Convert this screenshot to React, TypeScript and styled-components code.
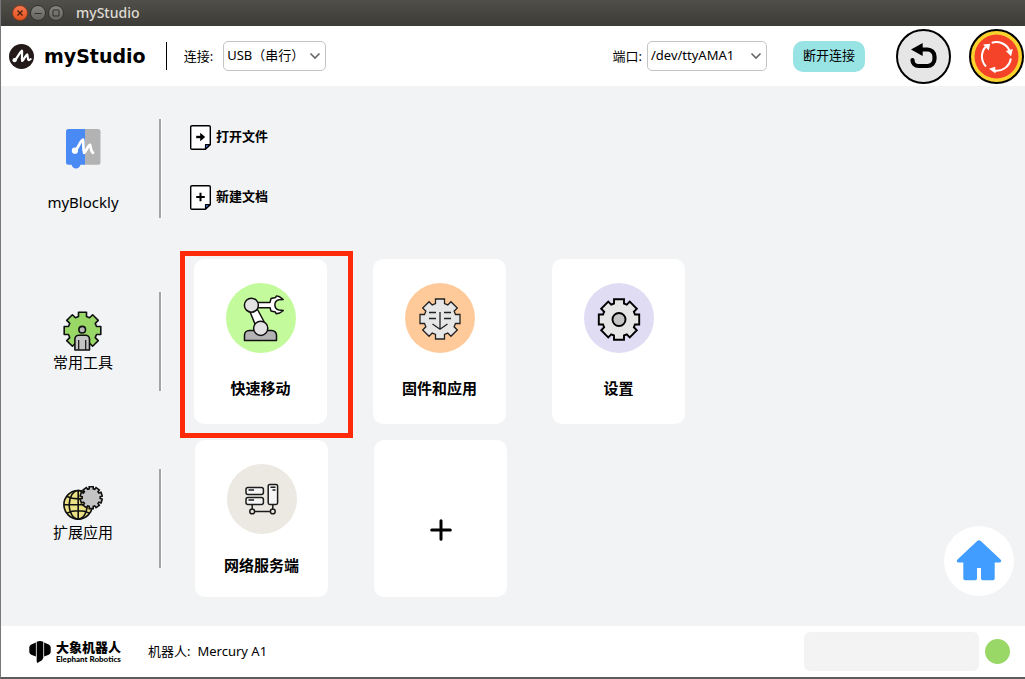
import React from "react";
import styled, { createGlobalStyle } from "styled-components";

const GlobalStyle = createGlobalStyle`
  *, *::before, *::after { box-sizing: border-box; }
  html, body, #root { height: 100%; }
  body {
    margin: 0;
    background: #fff;
    color: #000;
    font-family: "Noto Sans", "Noto Sans CJK SC", sans-serif;
    font-size: 13px;
  }
  button, input, select { font: inherit; color: inherit; }
  svg { display: block; flex: none; }
`;

const Window = styled.div`
  min-height: 100%;
  display: flex;
  flex-direction: column;
  border-left: 1px solid #77787a;
  border-bottom: 2px solid #5c5c5a;
`;

const TitleBar = styled.div`
  height: 26px;
  display: flex;
  align-items: center;
  padding-left: 11px;
  background: linear-gradient(#504f49, #3c3b37);
  color: #dfdbd2;
`;

const WindowButton = styled.button<{ $close?: boolean }>`
  width: 16px;
  height: 16px;
  margin-right: 2px;
  padding: 0;
  display: flex;
  align-items: center;
  justify-content: center;
  border: 1px solid ${(p) => (p.$close ? "#8d3a1c" : "#33322e")};
  border-radius: 50%;
  background: ${(p) =>
    p.$close ? "linear-gradient(#f4774f, #e2531f)" : "linear-gradient(#85847d, #65645e)"};
`;

const WindowTitle = styled.span`
  margin-left: 10px;
  font-size: 14px;
  line-height: 20px;
  font-weight: 500;
`;

const Header = styled.header`
  height: 60px;
  display: flex;
  align-items: center;
  padding: 0 1px 0 8px;
  background: #fff;
`;

const Brand = styled.h1`
  margin: 0 20px 0 10px;
  font: bold 19px/28px "DejaVu Sans", sans-serif;
`;

const HeaderRule = styled.span`
  width: 1px;
  height: 28px;
  background: #000;
`;

const Field = styled.label<{ $gap: number }>`
  display: flex;
  align-items: center;
  gap: ${(p) => p.$gap}px;
  line-height: 20px;
`;

const HeaderLeft = styled.div`
  flex: 1;
  display: flex;
  align-items: center;

  ${Field} { margin-left: 17px; }
`;

const SelectBox = styled.span<{ $width: number }>`
  position: relative;
  width: ${(p) => p.$width}px;

  svg {
    position: absolute;
    right: 5px;
    top: 11px;
    pointer-events: none;
  }
`;

const Select = styled.select`
  width: 100%;
  height: 30px;
  padding: 0 20px 2px 3px;
  appearance: none;
  display: block;
  border: 1px solid #c4c4c4;
  border-radius: 5px;
  background: #fff;
`;

const DisconnectButton = styled.button`
  height: 31px;
  margin: 0 31px 0 26px;
  padding: 0 10px 2px;
  border: 0;
  border-radius: 10px;
  background: #98e3e3;
  line-height: 20px;
`;

const RoundButton = styled.button`
  padding: 0;
  border: 0;
  border-radius: 50%;
  background: none;

  & + & { margin-left: 18px; }
`;

const Main = styled.main`
  position: relative;
  flex: 1;
  padding: 33px 0 29px;
  background: #f1f3f5;
`;

const Section = styled.section<{ $gap?: number }>`
  display: flex;
  align-items: center;
  margin-top: ${(p) => p.$gap ?? 0}px;
`;

const Category = styled.h2<{ $gap: number; $top?: number; $bottom?: number }>`
  width: 158px;
  margin: 0;
  padding: ${(p) => p.$top ?? 0}px 0 ${(p) => p.$bottom ?? 0}px 6px;
  display: flex;
  flex-direction: column;
  align-items: center;
  gap: ${(p) => p.$gap}px;
  font-size: 15px;
  line-height: 22px;
  font-weight: 400;
`;

const SectionRule = styled.span`
  width: 3px;
  height: 99px;
  border-left: 2px solid #a3a3a3;
  border-right: 1px solid #fff;
`;

const FileList = styled.div`
  display: flex;
  flex-direction: column;
  gap: 35px;
  margin-left: 28px;
  padding-bottom: 3px;
`;

const FileButton = styled.button`
  height: 25px;
  padding: 0;
  display: flex;
  align-items: center;
  gap: 5px;
  border: 0;
  background: none;
  font-weight: 700;
  line-height: 20px;

  span { padding-bottom: 2px; }
`;

const CardRow = styled.div<{ $inset: number }>`
  display: flex;
  gap: 46px;
  margin-left: ${(p) => p.$inset}px;
`;

const CardSlot = styled.div`
  position: relative;
`;

const Highlight = styled.span`
  position: absolute;
  inset: -8px -26px -14px -14px;
  border: 5px solid #ff2a0a;
  pointer-events: none;
`;

const Card = styled.button<{ $compact?: boolean }>`
  width: 133px;
  height: ${(p) => (p.$compact ? 157 : 165)}px;
  padding: 24px 0 0;
  display: flex;
  flex-direction: column;
  align-items: center;
  gap: ${(p) => (p.$compact ? 20 : 24)}px;
  border: 0;
  border-radius: 10px;
  background: #fff;
  font-size: 15px;
  line-height: 22px;
  font-weight: 700;
`;

const AddCard = styled(Card)`
  padding-top: 22px;
  justify-content: center;
`;

const HomeButton = styled.button`
  position: absolute;
  right: 11px;
  bottom: 30px;
  padding: 0;
  border: 0;
  border-radius: 50%;
  background: #fff;
`;

const Footer = styled.footer`
  height: 51px;
  display: flex;
  align-items: center;
  padding: 0 15px 0 28px;
  background: #fff;
`;

const Company = styled.div`
  width: 93px;
  display: flex;
  align-items: center;
  gap: 5px;
  margin-right: 26px;
  white-space: nowrap;
`;

const CompanyName = styled.div`
  padding-top: 1px;
  font-size: 13px;
  line-height: 15px;
  font-weight: 900;
`;

const CompanyLatin = styled.div`
  font-family: Lato, sans-serif;
  font-size: 8px;
  line-height: 9px;
  font-weight: 900;
`;

const Robot = styled.div`
  flex: 1;
  display: flex;
  gap: 7px;
  padding-bottom: 2px;
  line-height: 20px;
`;

const StatusText = styled.input`
  width: 175px;
  height: 39px;
  margin-right: 6px;
  padding: 0 10px;
  border: 0;
  border-radius: 6px;
  background: #f3f3f3;
`;

const StatusLight = styled.span`
  width: 25px;
  height: 25px;
  border-radius: 50%;
  background: #99d867;
`;

// Closed outline of a gear whose teeth have parallel sides.
function gear(cx: number, cy: number, outer: number, inner: number, width: number, teeth = 8) {
  const pts: string[] = [];
  for (let i = 0; i < teeth; i++) {
    const a = (i * 2 * Math.PI) / teeth;
    const local = [
      [-width / 2, -inner],
      [-width / 2, -outer],
      [width / 2, -outer],
      [width / 2, -inner],
    ];
    for (const [x, y] of local) {
      const px = cx + x * Math.cos(a) - y * Math.sin(a);
      const py = cy + x * Math.sin(a) + y * Math.cos(a);
      pts.push(`${px.toFixed(2)} ${py.toFixed(2)}`);
    }
  }
  return `M${pts.join("L")}Z`;
}

const Chevron = () => (
  <svg width="12" height="8" viewBox="0 0 12 8" fill="none" stroke="#666" strokeWidth="1.6">
    <path d="M1.5 1.5 6 6l4.5-4.5" />
  </svg>
);

const LogoIcon = () => (
  <svg width="25" height="25" viewBox="0 0 25 25">
    <circle cx="12.5" cy="12.5" r="12.5" fill="#231a19" />
    <circle cx="5.6" cy="16.2" r="2.1" fill="#fff" />
    <path
      d="M5.600 16.200C8.400 14.500 9.500 9.500 13 6.600c.5 3-.6 6.600.2 10.400 2-1.600 2.800-5.200 5-6.600.8 2 .2 4.800 1.400 5.600.8.200 1.400-.4 2-.9"
      fill="none" stroke="#fff" strokeWidth="2.2" strokeLinecap="round" strokeLinejoin="round"
    />
  </svg>
);

const BackIcon = () => (
  <svg width="55" height="55" viewBox="0 0 55 55">
    <circle cx="27.5" cy="27.5" r="26.5" fill="#e6e6e6" stroke="#000" strokeWidth="2" />
    <path d="M15 20.500 26.700 14v13Z" fill="#000" />
    <path
      d="M25 20.500h6.500a7 7 0 0 1 7 7v2.500a7 7 0 0 1-7 7H22.500a6 6 0 0 1-6-6"
      fill="none" stroke="#000" strokeWidth="4.2" strokeLinecap="round"
    />
  </svg>
);

const StopIcon = () => (
  <svg width="55" height="55" viewBox="0 0 55 55">
    <circle cx="27.5" cy="27.5" r="26.5" fill="#fad22d" stroke="#000" strokeWidth="2" />
    <circle cx="27.5" cy="27.5" r="22" fill="#f5432a" />
    <g fill="none" stroke="#fff" strokeWidth="2">
      <path d="M22.700 13.900A14.400 14.400 0 0 1 40.500 21.500" />
      <path d="M41.800 29.500A14.400 14.400 0 0 1 24.500 41.500" />
      <path d="M17 37.500A14.400 14.400 0 0 1 16.500 18" />
    </g>
    <g fill="#fff">
      <path d="m36.800 22 7-2-1.700 7.200Z" />
      <path d="m26.200 37.800.3 6.700-6.500-4.700Z" />
      <path d="m14 15.500 7.200-.8-1.400 6.800Z" />
    </g>
  </svg>
);

const BlocklyIcon = () => (
  <svg width="35" height="40" viewBox="0 0 35 40">
    <path d="M19 0h13a2.500 2.500 0 0 1 2.500 2.500v30.700a2.500 2.500 0 0 1-2.500 2.500H19Z" fill="#b3b3b3" />
    <path d="M2.500 0H19v35.700h-4.500c-.7 2.300-2.200 3.800-4.500 3.800s-3.800-1.500-4.500-3.800h-3A2.500 2.500 0 0 1 0 33.200V2.500A2.500 2.500 0 0 1 2.500 0Z" fill="#4a8af4" />
    <circle cx="8.9" cy="21.7" r="3.1" fill="#fff" />
    <path
      d="M8.900 21.700C12.500 19.500 13.500 12.500 17 10.600c.8 4-.2 9 1.200 13.200 2.700-1.800 3.200-7 5.800-8 1 2.600.6 6.700 3 8"
      fill="none" stroke="#fff" strokeWidth="2.7" strokeLinecap="round" strokeLinejoin="round"
    />
  </svg>
);

const FileIcon = ({ kind }: { kind: "open" | "new" }) => (
  <svg width="21" height="25" viewBox="0 0 21 25">
    <path d="M2 .7h17a1.300 1.300 0 0 1 1.300 1.300v17.500l-5 4.800H2A1.300 1.300 0 0 1 .7 23V2A1.300 1.300 0 0 1 2 .7Z" fill="#fff" stroke="#000" strokeWidth="1.4" />
    <path d="M15.500 24v-4.300h4.700Z" fill="#3d7eea" stroke="#000" strokeWidth="1.2" strokeLinejoin="round" />
    {kind === "open" ? (
      <>
        <path d="M6.200 12h5" stroke="#000" strokeWidth="2.4" />
        <path d="M10.200 7.800 15.200 12l-5 4.200Z" />
      </>
    ) : (
      <path d="M6.200 12h8.600M10.500 7.700v8.600" stroke="#000" strokeWidth="2" />
    )}
  </svg>
);

const ToolsIcon = () => (
  <svg width="40" height="40" viewBox="0 0 40 40" stroke="#111" strokeWidth="1.6" strokeLinejoin="round">
    <path d={gear(19.5, 19.5, 18.3, 14, 8)} fill="#99d867" />
    <circle cx="19.2" cy="18.7" r="3.3" fill="#b8b8b8" />
    <path d="M11.900 39V28.200a4 4 0 0 1 4-4h6.600a4 4 0 0 1 4 4V39Z" fill="#c4c4c4" />
    <path d="M15.700 29v10M22.700 29v10" fill="none" strokeWidth="1.2" />
  </svg>
);

const ExtensionsIcon = () => (
  <svg width="40" height="35" viewBox="0 0 40 35" fill="none" stroke="#111" strokeWidth="1.6">
    <circle cx="15.2" cy="18.8" r="14.3" fill="#ebe184" />
    <ellipse cx="15.2" cy="18.8" rx="9" ry="14.3" />
    <path d="M.9 18.800h28.600M15.200 4.500v28.600M4 10.500c6 3.200 16.500 3.200 22.400 0M4 27.100c6-3.200 16.500-3.200 22.400 0" />
    <path d={gear(28.2, 11.6, 11, 8.8, 4, 10)} fill="#c4c4c4" />
  </svg>
);

const RobotArmIcon = () => (
  <svg width="70" height="70" viewBox="0 0 70 70" stroke="#111" strokeWidth="1.5" strokeLinejoin="round">
    <circle cx="35" cy="35" r="35" fill="#c3fa9b" stroke="none" />
    <path d="M18.500 57.500v-5.300a4.700 4.700 0 0 1 4.700-4.700h22.600a4.700 4.700 0 0 1 4.700 4.700v5.300Z" fill="#b3b3b3" />
    <path d="m23.500 27.500 5.700 14 8.800-3-6.500-12Z" fill="#fff" />
    <path d="M31 19.400h13l1-3.800 4.600-1.200.9-1.500 3.200.9 3.500 2.800-4.200.2c-5.500 1.400-5.500 8.800 0 10.200l4.200.6-3.500 2.400-3.400.8-.9-1.700-4.400-1-.9-3.300H31Z" fill="#fff" />
    <circle cx="25.4" cy="22.2" r="7" fill="#e3e3e3" />
    <circle cx="34.7" cy="45.3" r="7.1" fill="#e3e3e3" />
  </svg>
);

const FirmwareIcon = () => (
  <svg width="70" height="70" viewBox="0 0 70 70" stroke="#222" strokeWidth="1.3">
    <circle cx="35" cy="35" r="35" fill="#ffca99" stroke="none" />
    <path d={gear(35, 36, 20, 15.5, 9)} fill="#e6e6e6" />
    <path d="M35 29v17M27.500 41l7.500 5.200 7.500-5.200M24 29.500h7M24 35.500h7M39 29.500h7M39 35.500h7" fill="none" />
  </svg>
);

const SettingsIcon = () => (
  <svg width="70" height="70" viewBox="0 0 70 70" stroke="#000" strokeWidth="1.9">
    <circle cx="35" cy="35" r="35" fill="#e0dcf4" stroke="none" />
    <path d={gear(35, 36.5, 20.2, 16, 10)} fill="#e6e6e6" />
    <circle cx="35" cy="36.5" r="6.5" fill="#c4c4c4" />
  </svg>
);

const ServerIcon = () => (
  <svg width="70" height="70" viewBox="0 0 70 70" fill="none" stroke="#1c1c1c" strokeWidth="1.5">
    <circle cx="35" cy="35" r="35" fill="#ece9e2" stroke="none" />
    <rect x="19" y="23.4" width="17.4" height="7" rx="2" fill="#f5f5f5" />
    <rect x="19" y="33.4" width="17.4" height="7" rx="2" fill="#f5f5f5" />
    <rect x="41.2" y="20.4" width="9.4" height="20" rx="1.6" fill="#f5f5f5" />
    <path d="M21.500 26h5.500M21.500 36h5.500M43.500 23.300h5M45.500 26h3M25.200 40.400v4.800M45.800 40.400v4.800M27.600 47.400h15.800" />
    <circle cx="25.2" cy="47.4" r="2.4" />
    <circle cx="45.8" cy="47.4" r="2.4" />
  </svg>
);

const PlusIcon = () => (
  <svg width="24" height="24" viewBox="0 0 24 24" stroke="#000" strokeWidth="3" strokeLinecap="round">
    <path d="M2.700 12h18.600M12 2.700v18.600" />
  </svg>
);

const HomeIcon = () => (
  <svg width="70" height="70" viewBox="0 0 70 70">
    <path
      d="M33.200 15a2.600 2.600 0 0 1 3.600 0l19.700 18.400c1.400 1.400.7 3.100-1.200 3.100H50.700v16a1.700 1.700 0 0 1-1.700 1.700H38.700a1.700 1.700 0 0 1-1.700-1.700V42h-4v10.500a1.700 1.700 0 0 1-1.700 1.700H21a1.700 1.700 0 0 1-1.700-1.700v-16h-4.600c-1.900 0-2.600-1.700-1.200-3.100Z"
      fill="#419dff"
    />
  </svg>
);

const ElephantIcon = () => (
  <svg width="22" height="24" viewBox="0 0 22 24">
    <path d="M6.900 2.400v14L2.300 14.800Q.3 13.800.3 12V7.500q0-2 2-3Z" />
    <path d="M7.700 1.800Q11 .2 14.300 1.800v15.500q0 2-1.800 3.200L8.300 23l-.6-1.500Z" />
    <path d="M15.100 2.400v14l4.600-1.600q2-1 2-2.800V7.500q0-2-2-3Z" />
  </svg>
);

export default function App() {
  return (
    <Window>
      <GlobalStyle />
      <TitleBar>
        <WindowButton $close aria-label="Close">
          <svg width="6" height="6" viewBox="0 0 6 6" stroke="#4a1d0c" strokeWidth="1.3"><path d="m.5.5 5 5M5.500.5l-5 5" /></svg>
        </WindowButton>
        <WindowButton aria-label="Minimize">
          <svg width="8" height="8" viewBox="0 0 8 8" stroke="#33322e"><path d="M.5 4.500h7" /></svg>
        </WindowButton>
        <WindowButton aria-label="Maximize">
          <svg width="8" height="8" viewBox="0 0 8 8" stroke="#33322e" fill="none"><path d="M1 1h6v6H1Z" /></svg>
        </WindowButton>
        <WindowTitle>myStudio</WindowTitle>
      </TitleBar>

      <Header>
        <HeaderLeft>
          <LogoIcon />
          <Brand>myStudio</Brand>
          <HeaderRule />
          <Field $gap={10}>
            连接:
            <SelectBox $width={103}>
              <Select><option>USB（串行）</option></Select>
              <Chevron />
            </SelectBox>
          </Field>
        </HeaderLeft>
        <Field $gap={5}>
          端口:
          <SelectBox $width={120}>
            <Select><option>/dev/ttyAMA1</option></Select>
            <Chevron />
          </SelectBox>
        </Field>
        <DisconnectButton>断开连接</DisconnectButton>
        <RoundButton aria-label="返回"><BackIcon /></RoundButton>
        <RoundButton aria-label="急停"><StopIcon /></RoundButton>
      </Header>

      <Main>
        <Section>
          <Category $gap={22} $top={5}><BlocklyIcon />myBlockly</Category>
          <SectionRule />
          <FileList>
            <FileButton><FileIcon kind="open" /><span>打开文件</span></FileButton>
            <FileButton><FileIcon kind="new" /><span>新建文档</span></FileButton>
          </FileList>
        </Section>

        <Section $gap={41}>
          <Category $gap={0}><ToolsIcon />常用工具</Category>
          <SectionRule />
          <CardRow $inset={32}>
            <CardSlot>
              <Card><RobotArmIcon />快速移动</Card>
              <Highlight />
            </CardSlot>
            <Card><FirmwareIcon />固件和应用</Card>
            <Card><SettingsIcon />设置</Card>
          </CardRow>
        </Section>

        <Section $gap={16}>
          <Category $gap={0} $bottom={8}><ExtensionsIcon />扩展应用</Category>
          <SectionRule />
          <CardRow $inset={33}>
            <Card $compact><ServerIcon />网络服务端</Card>
            <AddCard $compact aria-label="添加"><PlusIcon /></AddCard>
          </CardRow>
        </Section>

        <HomeButton aria-label="主页"><HomeIcon /></HomeButton>
      </Main>

      <Footer>
        <Company>
          <ElephantIcon />
          <div>
            <CompanyName>大象机器人</CompanyName>
            <CompanyLatin>Elephant Robotics</CompanyLatin>
          </div>
        </Company>
        <Robot><span>机器人:</span><span>Mercury A1</span></Robot>
        <StatusText readOnly aria-label="状态" />
        <StatusLight />
      </Footer>
    </Window>
  );
}
